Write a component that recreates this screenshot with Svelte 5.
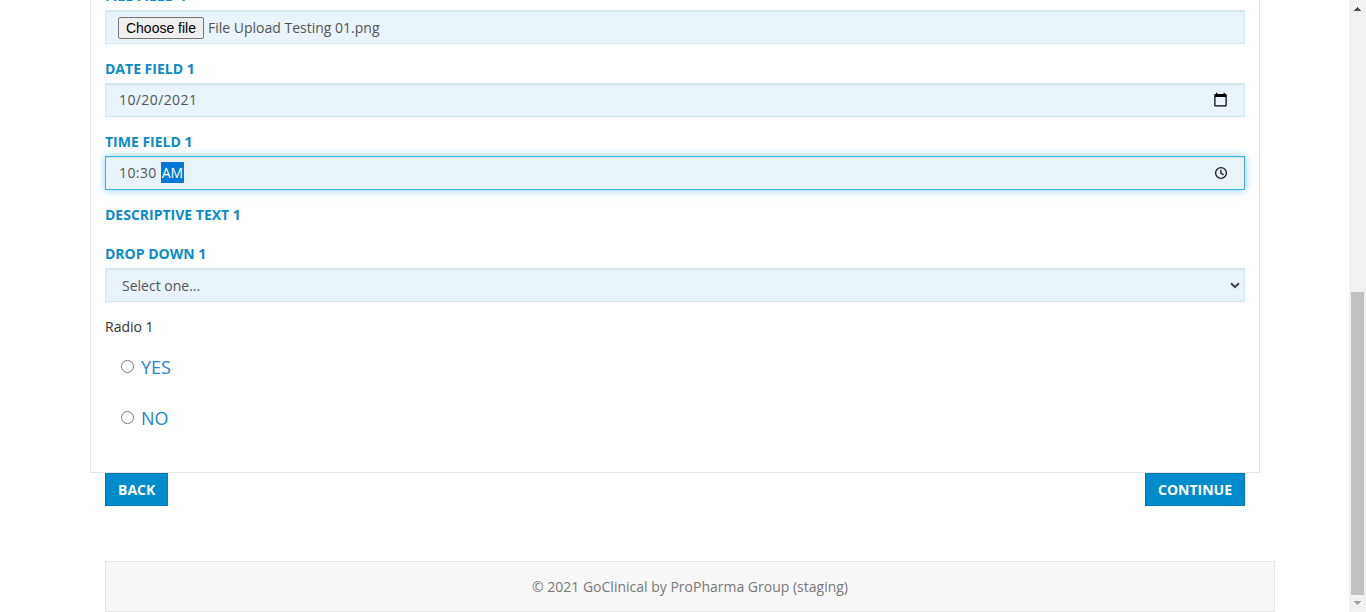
<script>
  const year = 2021;
  const options = ['YES', 'NO'];
</script>

<div class="window">
  <div class="page">
    <main class="panel">
      <div class="group">
        <div class="label">File Field 1</div>
        <div class="control file">
          <button class="choose" type="button">Choose file</button>
          <span class="filename">File Upload Testing 01.png</span>
        </div>
      </div>
      <div class="group">
        <div class="label">Date Field 1</div>
        <div class="control">
          <span class="date">10/20/2021</span>
          <svg class="icon calendar" width="15" height="15" viewBox="0 0 24 24">
            <path d="M20 3h-1V1h-2v2H7V1H5v2H4c-1.100 0-2 .9-2 2v16c0 1.100.9 2 2 2h16c1.100 0 2-.9 2-2V5c0-1.100-.9-2-2-2zm0 18H4V8h16v13z" />
          </svg>
        </div>
      </div>
      <div class="group">
        <div class="label">Time Field 1</div>
        <div class="control focused">
          <span class="time">10:30</span><span class="selected">AM</span>
          <svg class="icon clock" width="14" height="14" viewBox="0 0 14 14">
            <circle cx="7" cy="7" r="5.400" />
            <path d="M6.900 3.700V7.200L9.500 8.800" />
          </svg>
        </div>
      </div>
      <div class="label descriptive">Descriptive Text 1</div>
      <div class="group">
        <div class="label">Drop Down 1</div>
        <div class="control select">
          <span>Select one...</span>
          <svg class="chevron" width="10" height="7" viewBox="0 0 10 7"><path d="M1 1.200L5 5L9 1.200" /></svg>
        </div>
      </div>
      <div class="question">Radio 1</div>
      <div class="options">
        {#each options as option}
          <label class="option"><input type="radio" name="radio1" /><span>{option}</span></label>
        {/each}
      </div>
    </main>
    <div class="actions">
      <button class="btn" type="button">BACK</button>
      <button class="btn" type="button">CONTINUE</button>
    </div>
    <footer>© {year} GoClinical by ProPharma Group (staging)</footer>
  </div>
  <div class="scrollbar">
    <svg width="7" height="4" viewBox="0 0 7 4" shape-rendering="crispEdges"><path fill="#505050" d="M3 0h1v1h1v1h1v1h1v1H0V3h1V2h1V1h1z" /></svg>
    <div class="thumb"></div>
    <svg class="down" width="7" height="4" viewBox="0 0 7 4" shape-rendering="crispEdges"><path fill="#a3a3a3" d="M0 0h7v1H6v1H5v1H4v1H3V3H2V2H1V1H0z" /></svg>
  </div>
</div>

<style>
  :global(body) {
    overflow: hidden;
    background: #fff;
  }
  .window {
    display: flex;
    height: 612px;
    font: 14px/20px "Open Sans", sans-serif;
    color: #333;
  }
  .window, .window * {
    box-sizing: border-box;
  }
  .page {
    width: 1349px;
    padding-left: 90px;
    overflow: hidden;
  }
  .panel {
    width: 1170px;
    height: 487px;
    margin-top: -14px;
    padding: 0 14px;
    border: 1px solid #e5e5e5;
    border-top: 0;
  }
  .group {
    margin-bottom: 15px;
  }
  .label {
    height: 24px;
    color: #0a8aca;
    font-weight: 700;
    text-transform: uppercase;
  }
  .control {
    display: flex;
    align-items: center;
    height: 34px;
    padding: 0 12px;
    border: 1px solid #d1e9f2;
    background: #e8f3fa;
    box-shadow: inset 0 1px 1px rgba(0, 0, 0, 0.075);
    color: #555;
  }
  .file {
    padding-top: 2px;
  }
  .focused {
    border-color: #3bafec;
    box-shadow: inset 0 1px 1px rgba(0, 0, 0, 0.075), 0 0 8px rgba(59, 175, 236, 0.6);
  }
  .choose {
    width: 86px;
    height: 22px;
    margin-right: 4px;
    padding: 0;
    border: 1px solid #767676;
    border-radius: 2px;
    background: #efefef;
    color: #000;
    font: 14px/18px "Liberation Sans", sans-serif;
  }
  .date {
    padding-left: 1px;
    letter-spacing: 0.400px;
  }
  .time {
    padding-left: 1px;
    margin-right: 4px;
    letter-spacing: 0.400px;
  }
  .selected {
    height: 21px;
    margin-bottom: 1px;
    padding: 0 1px;
    background: #0078d7;
    color: #fff;
    line-height: 22px;
  }
  .icon {
    margin-left: auto;
    margin-right: 4px;
  }
  .calendar {
    margin-bottom: 1px;
  }
  .clock {
    fill: none;
    stroke: #222;
    stroke-width: 1.400;
  }
  .descriptive {
    height: 39px;
  }
  .select {
    padding: 0 4px 0 16px;
  }
  .select span {
    padding-top: 1px;
  }
  .chevron {
    margin-left: auto;
    fill: none;
    stroke: #444;
    stroke-width: 2;
  }
  .options {
    padding: 17px 0 0 16px;
  }
  .option {
    display: flex;
    align-items: center;
    height: 26px;
    margin-bottom: 25px;
    color: #1c87c9;
    font-size: 18px;
    line-height: 26px;
  }
  .option input {
    width: 13px;
    height: 13px;
    margin: 0 7px 1px 0;
  }
  .actions {
    display: flex;
    justify-content: space-between;
    width: 1170px;
    padding: 0 15px;
  }
  .btn {
    height: 33px;
    padding: 0 12px;
    border: 1px solid #007ab8;
    border-radius: 0;
    background: #008ccc;
    color: #fff;
    font: 700 14px/20px "Open Sans", sans-serif;
  }
  footer {
    width: 1170px;
    height: 51px;
    margin: 55px 0 0 15px;
    border: 1px solid #e5e5e5;
    background: #f7f7f7;
    color: #777;
    line-height: 50px;
    text-align: center;
  }
  .scrollbar {
    display: flex;
    flex-direction: column;
    align-items: center;
    width: 17px;
    padding-top: 7px;
    background: #f1f1f1;
  }
  .thumb {
    width: 13px;
    height: 303px;
    margin-top: 281px;
    background: #c1c1c1;
  }
  .down {
    margin-top: 6px;
  }
</style>
